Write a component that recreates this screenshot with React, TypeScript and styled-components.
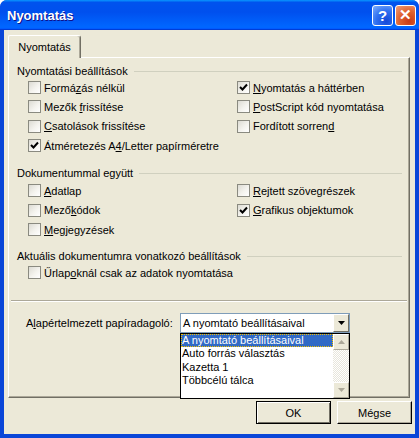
import styled, { createGlobalStyle } from "styled-components";

const GlobalStyle = createGlobalStyle`
  html, body { margin: 0; padding: 0; background: #fff; }
  body { font-family: "Liberation Sans", Arial, sans-serif; font-size: 11px; }
  * { box-sizing: border-box; }
`;

const Window = styled.div`
  width: 419px;
  height: 438px;
  display: flex;
  flex-direction: column;
  background: #0a46d8;
  border-radius: 7px 7px 0 0;
  overflow: hidden;
`;

const TitleBar = styled.div`
  height: 30px;
  flex: none;
  display: flex;
  align-items: center;
  padding: 0 3px 0 7px;
  background: linear-gradient(180deg, #0997ff, #0053ee 8%, #0050ee 40%, #06f 88%, #06f 93%, #005bff 95%, #003dd7 96%, #003dd7);
`;

const Title = styled.div`
  flex: 1;
  color: #fff;
  font-weight: bold;
  font-size: 13px;
  text-shadow: 1px 1px #0f1089;
  margin-top: 1px;
`;

const CaptionButton = styled.div<{ $close?: boolean }>`
  width: 21px;
  height: 21px;
  margin-left: 2px;
  border: 1px solid #fff;
  border-radius: 3px;
  display: flex;
  align-items: center;
  justify-content: center;
  color: #fff;
  font-weight: bold;
  font-size: 15px;
  background: ${(p) =>
    p.$close
      ? "radial-gradient(circle at 70% 80%, #c93b16, #e0632f 50%, #f0a07c)"
      : "radial-gradient(circle at 70% 80%, #1448d8, #2f6ff0 50%, #7fb0ff)"};
`;

const Body = styled.div`
  flex: 1;
  margin: 0 4px 4px;
  padding: 5px 5px 0 4px;
  background: #ece9d8;
  display: flex;
  flex-direction: column;
`;

const TabStrip = styled.div`
  display: flex;
  height: 22px;
  position: relative;
  z-index: 1;
`;

const Tab = styled.div`
  width: 73px;
  height: 23px;
  display: flex;
  align-items: center;
  justify-content: center;
  padding-bottom: 1px;
  background: #ece9d8;
  border-top: 1px solid #fff;
  border-left: 1px solid #fff;
  border-right: 1px solid #716f64;
  border-radius: 2px 3px 0 0;
  box-shadow: inset -1px 0 #aca899;
`;

const Panel = styled.div`
  height: 341px;
  border-top: 1px solid #fff;
  border-left: 1px solid #fff;
  border-right: 1px solid #716f64;
  border-bottom: 1px solid #716f64;
  box-shadow: inset -1px -1px #aca899;
  padding: 6px 7px 0 8px;
  display: flex;
  flex-direction: column;
`;

const GroupHeader = styled.div<{ $top?: number }>`
  height: 14px;
  margin-top: ${(p) => p.$top ?? 0}px;
  display: flex;
  align-items: center;
  &::after {
    content: "";
    flex: 1;
    height: 0;
    border-top: 1px solid #d0d0bf;
    margin-left: 6px;
  }
`;

const Grid = styled.div<{ $top?: number }>`
  display: grid;
  grid-template-columns: 209px 1fr;
  grid-auto-rows: 19.33px;
  padding-left: 11px;
  margin-top: ${(p) => p.$top ?? 0}px;
`;

const Item = styled.label<{ $span?: boolean }>`
  display: flex;
  align-items: center;
  gap: 3px;
  white-space: nowrap;
  grid-column: ${(p) => (p.$span ? "1 / 3" : "auto")};
`;

const Box = styled.span`
  width: 13px;
  height: 13px;
  flex: none;
  border: 1px solid #8a8a80;
  background: linear-gradient(135deg, #dcdbd3, #f4f3ee 55%, #fff);
  display: flex;
  align-items: center;
  justify-content: center;
`;

const Separator = styled.div`
  margin: 17px -5px 0 -6px;
  border-top: 1px solid #aca899;
  border-bottom: 1px solid #fff;
`;

const ComboRow = styled.div`
  display: flex;
  align-items: center;
  margin-top: 11px;
  padding-left: 9px;
`;

const ComboLabel = styled.span`
  width: 154px;
`;

const Combo = styled.div`
  position: relative;
  width: 170px;
  height: 20px;
  background: #fff;
  border: 1px solid #7f9db9;
  display: flex;
  align-items: center;
  padding-left: 2px;
`;

const ComboText = styled.span`
  flex: 1;
`;

const DropButton = styled.div`
  width: 16px;
  height: 18px;
  background: #ece9d8;
  border-top: 1px solid #fff;
  border-left: 1px solid #fff;
  border-right: 1px solid #716f64;
  border-bottom: 1px solid #716f64;
  display: flex;
  align-items: center;
  justify-content: center;
`;

const DropList = styled.div`
  position: absolute;
  top: 19px;
  left: -1px;
  width: 170px;
  height: 66px;
  background: #fff;
  border: 1px solid #000;
  display: flex;
  z-index: 2;
`;

const Options = styled.div`
  flex: 1;
  padding-top: 0;
`;

const Option = styled.div<{ $active?: boolean }>`
  height: 13.5px;
  line-height: 13px;
  padding-left: 1px;
  white-space: nowrap;
  background: ${(p) => (p.$active ? "#316ac5" : "transparent")};
  color: ${(p) => (p.$active ? "#fff" : "#000")};
  outline: ${(p) => (p.$active ? "1px dotted #f4c000" : "none")};
  outline-offset: -1px;
`;

const ScrollBar = styled.div`
  width: 16px;
  display: flex;
  flex-direction: column;
  justify-content: space-between;
  background: repeating-conic-gradient(#fff 0 25%, #e8e6dc 0 50%) 0 0 / 2px 2px;
`;

const ScrollArrow = styled.div`
  height: 16px;
  background: #ece9d8;
  border-top: 1px solid #fff;
  border-left: 1px solid #fff;
  border-right: 1px solid #aca899;
  border-bottom: 1px solid #aca899;
  display: flex;
  align-items: center;
  justify-content: center;
`;

const Buttons = styled.div`
  display: flex;
  justify-content: flex-end;
  gap: 6px;
  margin: 3px -2px 0 0;
`;

const Button = styled.div<{ $default?: boolean }>`
  width: 75px;
  height: 23px;
  display: flex;
  align-items: center;
  justify-content: center;
  background: #ece9d8;
  border: 1px solid ${(p) => (p.$default ? "#000" : "#fff")};
  border-right-color: #000;
  border-bottom-color: #000;
  box-shadow: ${(p) =>
    p.$default
      ? "inset 1px 1px #fff, inset -1px -1px #716f64"
      : "inset -1px -1px #aca899"};
`;

function Check() {
  return (
    <svg width="9" height="9" viewBox="0 0 9 9">
      <path d="M1 4 L3.5 6.5 L8 1.5" fill="none" stroke="#000" strokeWidth="2" />
    </svg>
  );
}

function CheckItem({ checked, span, children }: any) {
  return (
    <Item $span={span}>
      <Box>{checked && <Check />}</Box>
      <span>{children}</span>
    </Item>
  );
}

function Arrow({ up, color }: { up?: boolean; color: string }) {
  return (
    <svg width="7" height="4" viewBox="0 0 7 4">
      <path d={up ? "M0 4 L3.5 0 L7 4 Z" : "M0 0 L7 0 L3.5 4 Z"} fill={color} />
    </svg>
  );
}

export default function App() {
  return (
    <>
      <GlobalStyle />
      <Window>
        <TitleBar>
          <Title>Nyomtatás</Title>
          <CaptionButton>?</CaptionButton>
          <CaptionButton $close>✕</CaptionButton>
        </TitleBar>
        <Body>
          <TabStrip>
            <Tab>Nyomtatás</Tab>
          </TabStrip>
          <Panel>
            <GroupHeader>Nyomtatási beállítások</GroupHeader>
            <Grid>
              <CheckItem>
                Formá<u>z</u>ás nélkül
              </CheckItem>
              <CheckItem checked>
                <u>N</u>yomtatás a háttérben
              </CheckItem>
              <CheckItem>
                Mezők <u>f</u>rissítése
              </CheckItem>
              <CheckItem>
                <u>P</u>ostScript kód nyomtatása
              </CheckItem>
              <CheckItem>
                <u>C</u>satolások frissítése
              </CheckItem>
              <CheckItem>
                Fordított sorren<u>d</u>
              </CheckItem>
              <CheckItem checked span>
                Átméretezés A<u>4</u>/Letter papírméretre
              </CheckItem>
            </Grid>

            <GroupHeader $top={11}>Dokumentummal együtt</GroupHeader>
            <Grid $top={1}>
              <CheckItem>
                <u>A</u>datlap
              </CheckItem>
              <CheckItem>
                <u>R</u>ejtett szövegrészek
              </CheckItem>
              <CheckItem>
                Mező<u>k</u>ódok
              </CheckItem>
              <CheckItem checked>
                <u>G</u>rafikus objektumok
              </CheckItem>
              <CheckItem>
                <u>M</u>egjegyzések
              </CheckItem>
            </Grid>

            <GroupHeader $top={10}>Aktuális dokumentumra vonatkozó beállítások</GroupHeader>
            <Grid>
              <CheckItem span>
                Űrlap<u>o</u>knál csak az adatok nyomtatása
              </CheckItem>
            </Grid>

            <Separator />

            <ComboRow>
              <ComboLabel>
                A<u>l</u>apértelmezett papíradagoló:
              </ComboLabel>
              <Combo>
                <ComboText>A nyomtató beállításaival</ComboText>
                <DropButton>
                  <Arrow color="#000" />
                </DropButton>
                <DropList>
                  <Options>
                    <Option $active>A nyomtató beállításaival</Option>
                    <Option>Auto forrás választás</Option>
                    <Option>Kazetta 1</Option>
                    <Option>Többcélú tálca</Option>
                  </Options>
                  <ScrollBar>
                    <ScrollArrow>
                      <Arrow up color="#aca899" />
                    </ScrollArrow>
                    <ScrollArrow>
                      <Arrow color="#aca899" />
                    </ScrollArrow>
                  </ScrollBar>
                </DropList>
              </Combo>
            </ComboRow>
          </Panel>
          <Buttons>
            <Button $default>OK</Button>
            <Button>Mégse</Button>
          </Buttons>
        </Body>
      </Window>
    </>
  );
}
